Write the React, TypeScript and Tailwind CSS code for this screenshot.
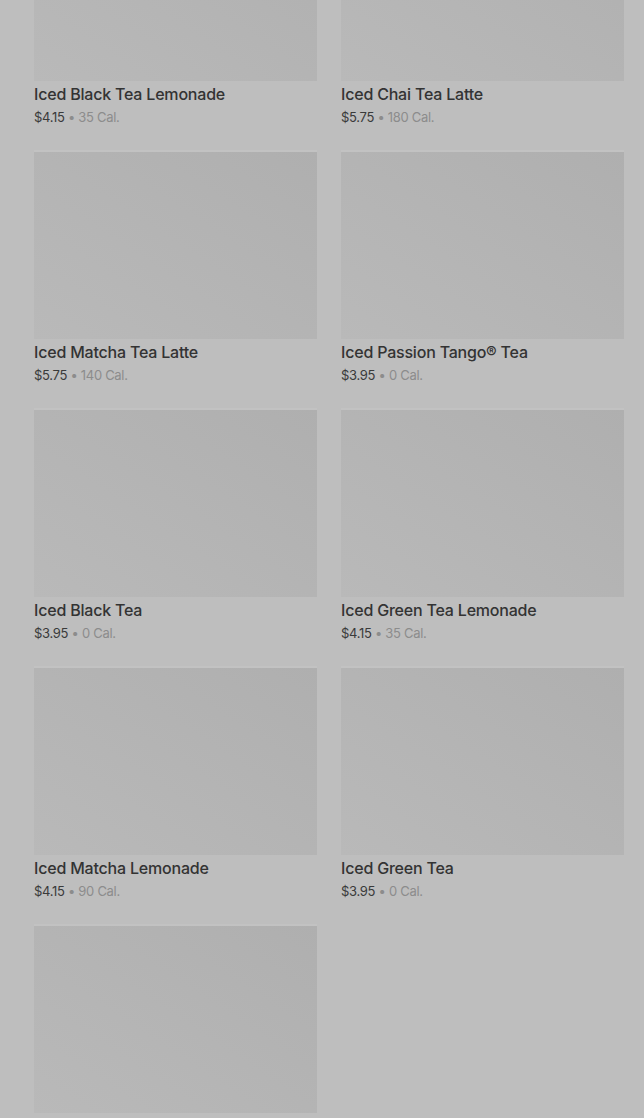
const items = [
  { name: 'Iced Black Tea Lemonade', price: '$4.15', cal: '35 Cal.' },
  { name: 'Iced Chai Tea Latte', price: '$5.75', cal: '180 Cal.' },
  { name: 'Iced Matcha Tea Latte', price: '$5.75', cal: '140 Cal.' },
  { name: 'Iced Passion Tango® Tea', price: '$3.95', cal: '0 Cal.' },
  { name: 'Iced Black Tea', price: '$3.95', cal: '0 Cal.' },
  { name: 'Iced Green Tea Lemonade', price: '$4.15', cal: '35 Cal.' },
  { name: 'Iced Matcha Lemonade', price: '$4.15', cal: '90 Cal.' },
  { name: 'Iced Green Tea', price: '$3.95', cal: '0 Cal.' },
]

function Thumb() {
  return (
    <div className="h-[189px] w-full border-t-2 border-[#c2c2c2] bg-gradient-to-tr from-[#b9b9b9] via-[#b4b4b4] to-[#afafaf]" />
  )
}

function ProductCard({ name, price, cal }: { name: string; price: string; cal: string }) {
  return (
    <div className="flex flex-col">
      <Thumb />
      <div className="mt-[2px] text-[16px] leading-[22px] font-medium tracking-[-0.2px] text-[#333333]">{name}</div>
      <div className="mt-[3px] text-[13px] leading-[18px] tracking-[-0.3px]">
        <span className="text-[#3a3a3a]">{price}</span>
        <span className="text-[#8c8c8c]"> • {cal}</span>
      </div>
    </div>
  )
}

export default function App() {
  return (
    <div
      className="h-[1118px] w-full overflow-hidden bg-[#bebebe]"
      style={{ fontFamily: 'Inter, "Noto Sans", sans-serif' }}
    >
      <div className="-mt-[108px] grid grid-cols-2 gap-x-[24px] gap-y-[24px] pl-[34px] pr-[20px]">
        {items.map((it) => (
          <ProductCard key={it.name} {...it} />
        ))}
        {/* next card continues below the fold */}
        <div className="flex flex-col">
          <Thumb />
        </div>
      </div>
    </div>
  )
}
